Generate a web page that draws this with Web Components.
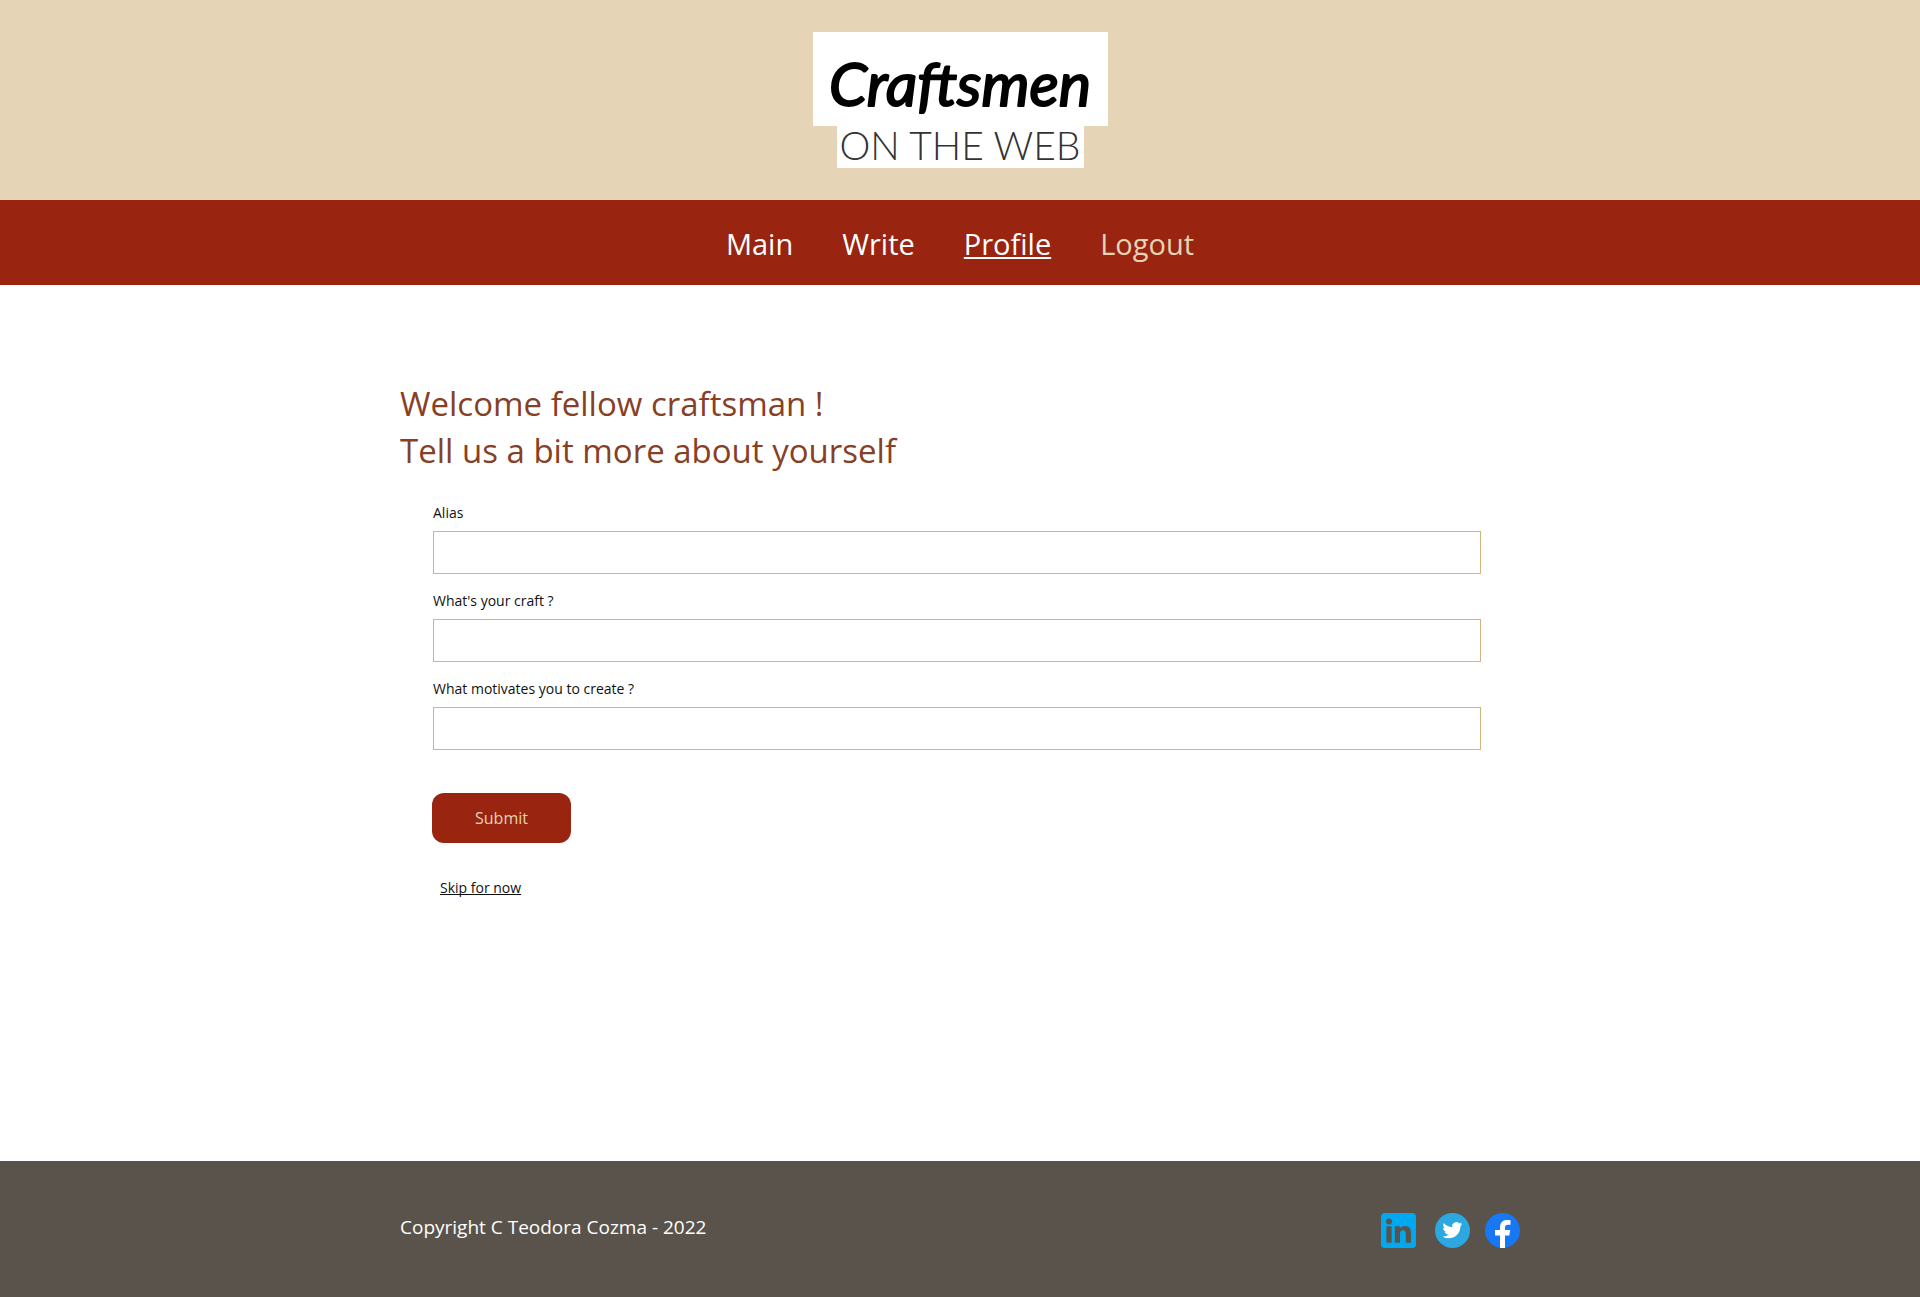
<!DOCTYPE html>
<html lang="en">
<head>
<meta charset="utf-8">
<meta name="viewport" content="width=device-width, initial-scale=1">
<title>Craftsmen on the Web - Profile</title>
<style>
html,body{margin:0;padding:0}
body{
  --sand:#e5d4b6;--brick:#99240f;--rust:#873f26;--line:#d1b77f;--stone:#59534b;
  --page:min(1120px,calc(100% - 48px));
  font-family:"Open Sans","Noto Sans",sans-serif;color:#111;background:#fff}
</style>
</head>
<body>
<craft-app></craft-app>
<script>
const define = (name, html, init) => customElements.define(name, class extends HTMLElement {
  connectedCallback() {
    if (this.shadowRoot) return;
    const t = document.createElement('template');
    t.innerHTML = html;
    this.attachShadow({mode: 'open'}).append(t.content.cloneNode(true));
    if (init) init(this, this.shadowRoot);
  }
});

define('craft-logo', `
<style>
:host{display:block}
.logo{display:flex;flex-direction:column;align-items:center}
.name,.tag{display:block;overflow:visible;background:#fff;fill:#000}
.name text{font:italic 400 61px Lato,sans-serif;stroke:#000;stroke-width:2;stroke-linejoin:round}
.tag text{font:300 39px Lato,sans-serif;fill:#333}
</style>
<div class="logo">
<svg class="name" width="295" height="94" viewBox="0 0 295 94"><text x="147" y="74" text-anchor="middle">Craftsmen</text></svg>
<svg class="tag" width="247" height="42" viewBox="0 0 247 42"><text x="123" y="34" text-anchor="middle">ON THE WEB</text></svg>
</div>`);

define('craft-header', `
<style>
:host{display:block;background:var(--sand)}
header{display:flex;justify-content:center;padding:32px 0}
</style>
<header><craft-logo></craft-logo></header>`);

define('nav-item', `
<style>
:host{display:block}
a{color:#fff;text-decoration:none;font-size:29px;line-height:40px}
:host([current]) a{text-decoration:underline;text-decoration-thickness:2px;text-underline-offset:2px;text-decoration-skip-ink:none}
:host([muted]) a{color:var(--sand)}
</style>
<a href="#"><slot></slot></a>`, (el, root) => {
  if (el.hasAttribute('current')) root.querySelector('a').setAttribute('aria-current', 'page');
});

define('craft-nav', `
<style>
:host{display:block;background:var(--brick)}
nav{display:flex;flex-wrap:wrap;justify-content:center;gap:0 49px;padding:24px 0 21px}
</style>
<nav><nav-item>Main</nav-item><nav-item>Write</nav-item><nav-item current>Profile</nav-item><nav-item muted>Logout</nav-item></nav>`);

define('text-field', `
<style>
:host{display:flex;flex-direction:column}
label{font-size:14px;line-height:20px;margin-bottom:8px}
input{box-sizing:border-box;width:100%;height:43px;margin:0;padding:0 12px;border:1px solid var(--line);border-radius:0;background:#fff;font:inherit;font-size:15px}
</style>
<label for="field"></label><input id="field" type="text">`, (el, root) => {
  root.querySelector('label').textContent = el.getAttribute('label');
});

define('profile-form', `
<style>
:host{display:block}
h1{margin:0;font-size:33px;line-height:47px;font-weight:400;color:var(--rust)}
form{display:flex;flex-direction:column;align-items:flex-start;padding:29px 39px 0 32px}
.fields{display:flex;flex-direction:column;gap:17px;align-self:stretch;padding-left:1px}
button{width:139px;height:50px;margin:43px 0 35px;padding:0;border:0;border-radius:12px;background:var(--brick);color:var(--sand);font:inherit;font-size:16px}
a{margin-left:8px;font-size:14px;line-height:20px;color:#111;text-decoration-skip-ink:none;text-underline-offset:1px}
</style>
<h1>Welcome fellow craftsman !<br>Tell us a bit more about yourself</h1>
<form>
<div class="fields">
<text-field label="Alias"></text-field>
<text-field label="What's your craft ?"></text-field>
<text-field label="What motivates you to create ?"></text-field>
</div>
<button type="button">Submit</button>
<a href="#">Skip for now</a>
</form>`);

define('social-links', `
<style>
:host{display:flex;align-items:center;gap:15px}
a,svg{display:block;width:35px;height:35px}
.square{margin-right:4px}
</style>
<a class="square" href="#" aria-label="LinkedIn"><svg viewBox="0 0 35 35"><rect width="35" height="35" rx="4" fill="#00a8f0"/><g fill="#59534b"><circle cx="8" cy="8.500" r="3"/><rect x="5.400" y="13.300" width="5.200" height="16.400"/><path d="M13.800 13.300h5v2.300c1-1.700 2.800-2.700 5-2.700 4.800 0 6.200 3 6.200 7.600v9.200h-5.200v-8.300c0-2.200-.3-4.200-2.800-4.200s-3 2-3 4.100v8.400h-5.200z"/></g></svg></a>
<a href="#" aria-label="Twitter"><svg viewBox="0 0 35 35"><circle cx="17.500" cy="17.500" r="17.500" fill="#2ca7e0"/><path fill="#fff" transform="translate(7.500 7.300) scale(.83)" d="M23.950 4.570a10 10 0 0 1-2.820.770 4.960 4.960 0 0 0 2.160-2.720c-.950.550-2 .950-3.130 1.180a4.920 4.920 0 0 0-8.380 4.480C7.690 8.100 4.070 6.130 1.640 3.160a4.820 4.820 0 0 0-.670 2.480c0 1.710.870 3.210 2.190 4.100a4.900 4.900 0 0 1-2.230-.620v.060a4.920 4.920 0 0 0 3.950 4.830 5 5 0 0 1-2.210.080 4.940 4.940 0 0 0 4.600 3.420A9.870 9.870 0 0 1 0 19.540a13.990 13.990 0 0 0 7.560 2.210c9.050 0 14-7.500 14-13.980 0-.210 0-.420-.020-.630a9.940 9.940 0 0 0 2.410-2.570z"/></svg></a>
<a href="#" aria-label="Facebook"><svg viewBox="0 0 35 35"><circle cx="17.500" cy="17.500" r="17.500" fill="#1877f2"/><path fill="#fff" d="M15 35V22.500h-5V17h5v-2.500c0-5 2.700-7.600 7-7.600 1.500 0 3 .2 3.500.3v4.600h-2.300c-2.500 0-3.200 1.300-3.200 2.900V17h5.200l-.9 5.500H20V35z"/></svg></a>`);

define('craft-footer', `
<style>
:host{display:block;background:var(--stone)}
footer{display:flex;flex-wrap:wrap;align-items:flex-start;justify-content:space-between;width:var(--page);margin:0 auto;padding:48px 0 49px}
p{margin:0;color:#fff;font-size:19px;line-height:37px}
social-links{padding-top:4px}
</style>
<footer><p>Copyright C Teodora Cozma - 2022</p><social-links></social-links></footer>`);

define('craft-app', `
<style>
:host{display:flex;flex-direction:column;min-height:100vh}
main{flex:1;width:var(--page);margin:0 auto;padding:95px 0 64px}
</style>
<craft-header></craft-header>
<craft-nav></craft-nav>
<main><profile-form></profile-form></main>
<craft-footer></craft-footer>`);
</script>
</body>
</html>
